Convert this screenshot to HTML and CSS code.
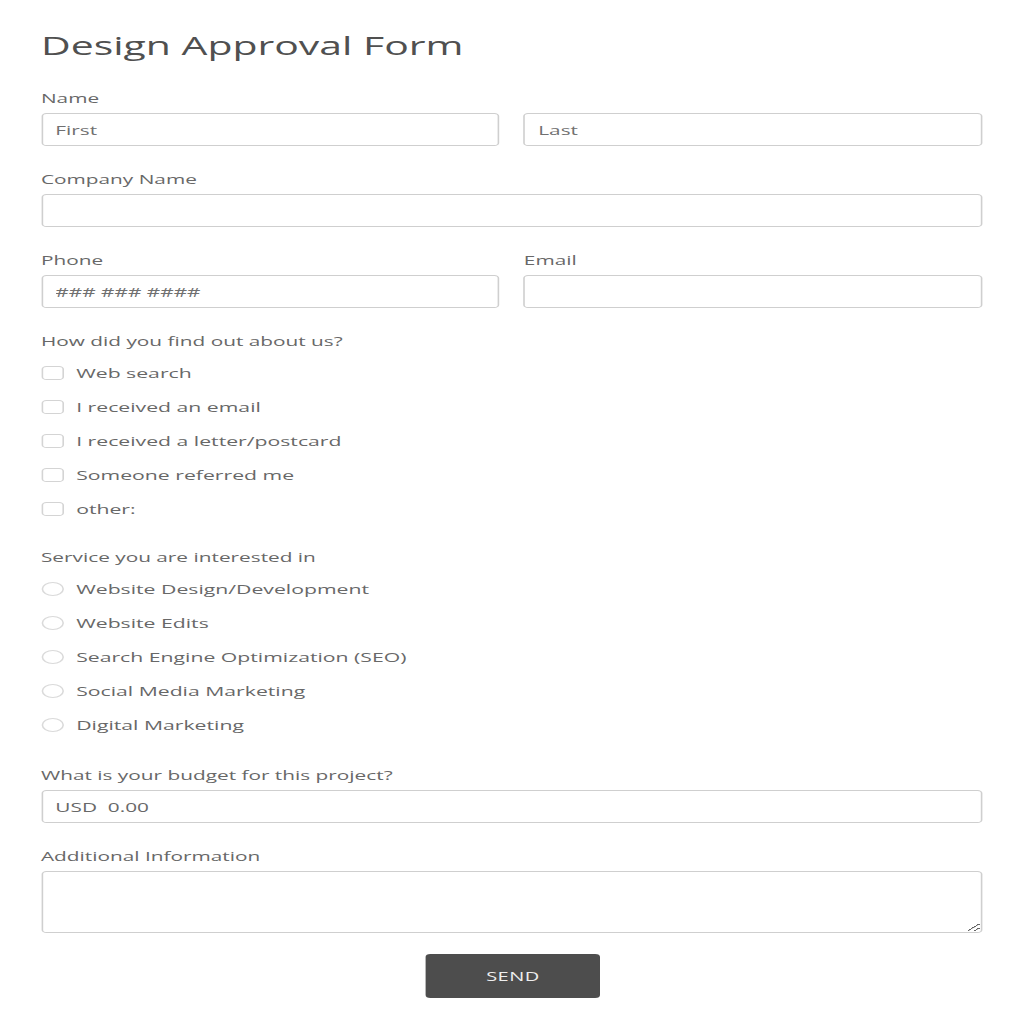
FILE: index.html
```html
<!DOCTYPE html>
<html lang="en">
<head>
<meta charset="utf-8">
<title>Design Approval Form</title>
<link rel="stylesheet" href="styles.css">
</head>
<body>
<div class="page">
  <form class="form">
    <h1 class="title">Design Approval Form</h1>

    <div class="field">
      <div class="label">Name</div>
      <div class="row-2">
        <input class="input" type="text" placeholder="First">
        <input class="input" type="text" placeholder="Last">
      </div>
    </div>

    <div class="field">
      <div class="label">Company Name</div>
      <input class="input" type="text">
    </div>

    <div class="row-2 field">
      <div>
        <div class="label">Phone</div>
        <input class="input" type="text" placeholder="### ### ####">
      </div>
      <div>
        <div class="label">Email</div>
        <input class="input" type="text">
      </div>
    </div>

    <div class="field options">
      <div class="label">How did you find out about us?</div>
      <label class="option"><span class="box"></span>Web search</label>
      <label class="option"><span class="box"></span>I received an email</label>
      <label class="option"><span class="box"></span>I received a letter/postcard</label>
      <label class="option"><span class="box"></span>Someone referred me</label>
      <label class="option"><span class="box"></span>other:</label>
    </div>

    <div class="field options services">
      <div class="label">Service you are interested in</div>
      <label class="option"><span class="box round"></span>Website Design/Development</label>
      <label class="option"><span class="box round"></span>Website Edits</label>
      <label class="option"><span class="box round"></span>Search Engine Optimization (SEO)</label>
      <label class="option"><span class="box round"></span>Social Media Marketing</label>
      <label class="option"><span class="box round"></span>Digital Marketing</label>
    </div>

    <div class="field">
      <div class="label">What is your budget for this project?</div>
      <input class="input" type="text" value="USD  0.00">
    </div>

    <div class="field last">
      <div class="label">Additional Information</div>
      <textarea class="textarea"></textarea>
    </div>

    <div class="actions">
      <button class="send" type="button">SEND</button>
    </div>
  </form>
</div>
</body>
</html>
```

FILE: styles.css
```css
html, body {
  margin: 0;
  padding: 0;
  background: #ffffff;
}

body {
  font-family: "Open Sans", "Liberation Sans", sans-serif;
  color: #686868;
}

/* the reference is rendered horizontally stretched */
.page {
  width: 640px;
  transform: scaleX(1.6);
  transform-origin: 0 0;
}

.form {
  margin-left: 25.6px;
  width: 588px;
  padding-top: 31px;
}

.title {
  margin: 0 0 28px 0;
  font-size: 25.6px;
  line-height: 30px;
  font-weight: 400;
  color: #505050;
}

.field {
  margin-bottom: 24px;
}

.field.options {
  margin-bottom: 22px;
}

.field.options.services {
  margin-bottom: 24px;
}

.field.last {
  margin-bottom: 21px;
}

.label {
  font-size: 13px;
  line-height: 18px;
  margin-bottom: 6px;
  color: #686868;
}

.row-2 {
  display: grid;
  grid-template-columns: 1fr 1fr;
  column-gap: 15.6px;
}

.input {
  display: block;
  box-sizing: border-box;
  width: 100%;
  height: 33px;
  margin: 0;
  padding: 0 8px;
  border: 1px solid #cfcfcf;
  border-radius: 3px;
  background: #ffffff;
  font-family: "Open Sans", "Liberation Sans", sans-serif;
  font-size: 13px;
  color: #686868;
  outline: none;
}

.input::placeholder {
  color: #707070;
  opacity: 1;
}

.option {
  display: flex;
  align-items: center;
  height: 34px;
  font-size: 13.25px;
  color: #686868;
}

.box {
  box-sizing: border-box;
  width: 14px;
  height: 14px;
  margin-right: 8px;
  border: 1px solid #d4d4d4;
  border-radius: 3px;
  background: #ffffff;
  flex: none;
}

.box.round {
  border-radius: 50%;
  border-color: #dadada;
}

.textarea {
  display: block;
  box-sizing: border-box;
  width: 100%;
  height: 62px;
  margin: 0;
  padding: 6px 8px;
  border: 1px solid #cfcfcf;
  border-radius: 3px;
  background: #ffffff;
  font-family: "Open Sans", "Liberation Sans", sans-serif;
  font-size: 13px;
  outline: none;
}

.actions {
  display: flex;
  justify-content: center;
  padding-left: 2px;
}

.send {
  width: 109px;
  height: 44px;
  border: none;
  border-radius: 3px;
  background: #4d4d4d;
  color: #eeeeee;
  font-family: "Open Sans", "Liberation Sans", sans-serif;
  font-size: 12.5px;
  letter-spacing: 0.3px;
  cursor: pointer;
}
```
